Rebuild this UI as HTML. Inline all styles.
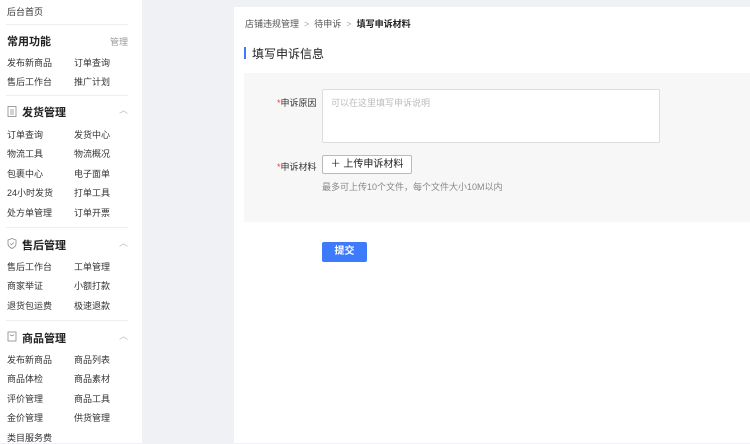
<!DOCTYPE html>
<html><head><meta charset="utf-8"><style>
*{margin:0;padding:0;box-sizing:border-box}
body{width:750px;height:443px;overflow:hidden;background:#f0f1f5;font-family:"Liberation Sans","Noto Sans CJK SC",sans-serif;position:relative;color:#333}
.sb{position:absolute;left:0;top:0;width:142px;height:443px;background:#fff}
.a{position:absolute;font-size:9px;color:#333;white-space:nowrap}
.h{position:absolute;font-size:11px;color:#222;font-weight:bold;white-space:nowrap}
.sep{position:absolute;left:6px;width:122px;height:1px;background:#eee}
.car{position:absolute;left:119px;font-size:9px;color:#bbb}
.card{position:absolute;left:234px;top:7px;width:516px;height:436px;background:#fff}
</style></head><body>
<div class="sb">
<div class="a" style="left:7px;top:5px">后台首页</div>
<div class="sep" style="top:24px"></div>
<div class="h" style="left:7px;top:33px">常用功能</div>
<div class="a" style="left:110px;top:35px;color:#999">管理</div>
<div class="a" style="left:7px;top:56px">发布新商品</div><div class="a" style="left:74px;top:56px">订单查询</div>
<div class="a" style="left:7px;top:75px">售后工作台</div><div class="a" style="left:74px;top:75px">推广计划</div>
<div class="sep" style="top:95px"></div>
<svg style="position:absolute;left:7px;top:106px" width="10" height="11"><rect x="1" y="0.5" width="8" height="10" fill="none" stroke="#888" stroke-width="0.8"/><path d="M3 4h4M3 6h4M3 8h4" stroke="#888" stroke-width="0.7"/></svg>
<div class="h" style="left:22px;top:104px">发货管理</div><div class="car" style="top:103px">︿</div>
<div class="a" style="left:7px;top:128px">订单查询</div><div class="a" style="left:74px;top:128px">发货中心</div>
<div class="a" style="left:7px;top:147px">物流工具</div><div class="a" style="left:74px;top:147px">物流概况</div>
<div class="a" style="left:7px;top:167px">包裹中心</div><div class="a" style="left:74px;top:167px">电子面单</div>
<div class="a" style="left:7px;top:186px">24小时发货</div><div class="a" style="left:74px;top:186px">打单工具</div>
<div class="a" style="left:7px;top:206px">处方单管理</div><div class="a" style="left:74px;top:206px">订单开票</div>
<div class="sep" style="top:227px"></div>
<svg style="position:absolute;left:7px;top:238px" width="10" height="11"><path d="M5 0.5L9 2v4c0 2-2 3.5-4 4.5C3 9.5 1 8 1 6V2z" fill="none" stroke="#888" stroke-width="0.8"/><path d="M3.3 5.5l1.3 1.3 2.2-2.3" fill="none" stroke="#888" stroke-width="0.7"/></svg>
<div class="h" style="left:22px;top:237px">售后管理</div><div class="car" style="top:236px">︿</div>
<div class="a" style="left:7px;top:260px">售后工作台</div><div class="a" style="left:74px;top:260px">工单管理</div>
<div class="a" style="left:7px;top:279px">商家举证</div><div class="a" style="left:74px;top:279px">小额打款</div>
<div class="a" style="left:7px;top:299px">退货包运费</div><div class="a" style="left:74px;top:299px">极速退款</div>
<div class="sep" style="top:320px"></div>
<svg style="position:absolute;left:7px;top:331px" width="10" height="11"><rect x="1" y="1" width="8" height="9" fill="none" stroke="#888" stroke-width="0.8"/><path d="M3 3.5q2 2.5 4 0" fill="none" stroke="#888" stroke-width="0.7"/></svg>
<div class="h" style="left:22px;top:330px">商品管理</div><div class="car" style="top:329px">︿</div>
<div class="a" style="left:7px;top:353px">发布新商品</div><div class="a" style="left:74px;top:353px">商品列表</div>
<div class="a" style="left:7px;top:372px">商品体检</div><div class="a" style="left:74px;top:372px">商品素材</div>
<div class="a" style="left:7px;top:392px">评价管理</div><div class="a" style="left:74px;top:392px">商品工具</div>
<div class="a" style="left:7px;top:411px">金价管理</div><div class="a" style="left:74px;top:411px">供货管理</div>
<div class="a" style="left:7px;top:431px">类目服务费</div>
</div>
<div class="card">
<div class="a" style="left:11px;top:10px;color:#555">店铺违规管理 <span style="color:#aaa">&nbsp;&gt;&nbsp;</span> 待申诉 <span style="color:#aaa">&nbsp;&gt;&nbsp;</span> <b style="color:#222">填写申诉材料</b></div>
<div style="position:absolute;left:10px;top:40px;width:2px;height:12px;background:#3e7bfa"></div>
<div style="position:absolute;left:18px;top:38px;font-size:12px;color:#222">填写申诉信息</div>
<div style="position:absolute;left:10px;top:66px;width:506px;height:149px;background:#f7f7f8"></div>
<div class="a" style="left:43px;top:89px"><span style="color:#f33">*</span>申诉原因</div>
<div style="position:absolute;left:88px;top:82px;width:338px;height:54px;background:#fff;border:1px solid #ddd;border-radius:2px"></div>
<div class="a" style="left:97px;top:89px;color:#bbb">可以在这里填写申诉说明</div>
<div class="a" style="left:43px;top:153px"><span style="color:#f33">*</span>申诉材料</div>
<div style="position:absolute;left:88px;top:148px;width:90px;height:19px;background:#fff;border:1px solid #bbb;border-radius:2px;font-size:10px;line-height:17px;text-align:center;color:#222">＋ 上传申诉材料</div>
<div class="a" style="left:88px;top:173px;color:#888">最多可上传10个文件，每个文件大小10M以内</div>
<div style="position:absolute;left:88px;top:235px;width:45px;height:20px;background:#3e7bfa;border-radius:2px;color:#fff;font-size:10px;font-weight:bold;line-height:20px;text-align:center">提交</div>
</div>
</body></html>
